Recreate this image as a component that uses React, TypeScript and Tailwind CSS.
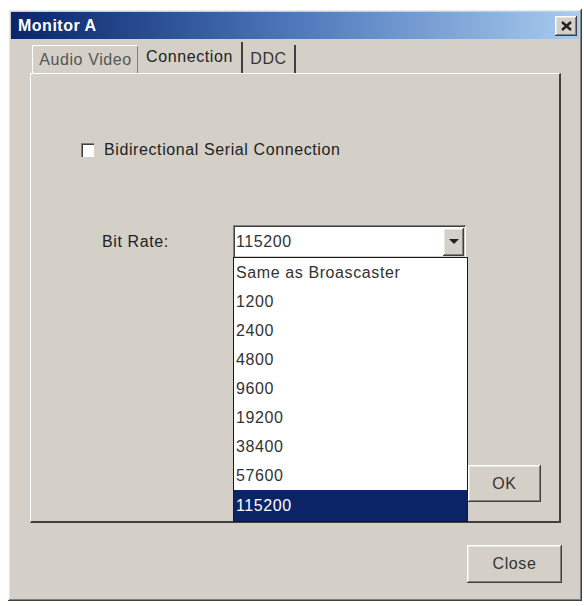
const rates = ["Same as Broascaster", "1200", "2400", "4800", "9600", "19200", "38400", "57600", "115200"]

// classic 3D bevels
const raised = "shadow-[inset_-1px_-1px_#404040,inset_1px_1px_#ffffff,inset_-2px_-2px_#808080,inset_2px_2px_#e8e6e1]"
const sunken = "shadow-[inset_1px_1px_#808080,inset_-1px_-1px_#ffffff,inset_2px_2px_#404040,inset_-2px_-2px_#d4d0c8]"

function Button({ label, className }: { label: string; className: string }) {
  return (
    <div className={`flex items-center justify-center bg-[#d4d0c8] text-[16px] tracking-[0.6px] text-[#333] ${raised} ${className}`}>
      {label}
    </div>
  )
}

export default function App() {
  return (
    <div className="w-[584px] h-[606px] bg-white pt-[9px] pl-[8px] font-['Liberation_Sans',Arial,sans-serif] overflow-hidden">
      <div className={`w-[574px] h-[592px] bg-[#d4d0c8] p-[3px] flex flex-col ${raised}`}>
        {/* title bar */}
        <div className="h-[27px] flex items-center justify-between pl-[7px] pr-[2px] bg-gradient-to-r from-[#0a246a] via-[#4f78bb] to-[#a9cbee]">
          <span className="text-white font-bold text-[16px] tracking-[0.5px]">Monitor A</span>
          <div className={`w-[22px] h-[20px] bg-[#d4d0c8] flex items-center justify-center ${raised}`}>
            <svg width="11" height="10" viewBox="0 0 11 10">
              <path d="M1 1 L10 9 M10 1 L1 9" stroke="#222" strokeWidth="2.4" />
            </svg>
          </div>
        </div>

        {/* tabs */}
        <div className="mt-[3px] h-[31px] ml-[21px] flex items-end text-[16px] tracking-[0.6px]">
          <div className="w-[106px] h-[28px] flex items-center justify-center text-[#555] border-t border-l border-white shadow-[inset_-1px_0_#808080]">
            Audio Video
          </div>
          <div className="w-[105px] h-[31px] flex items-center justify-center text-[#222] border-r-2 border-[#404040] pb-[2px]">
            Connection
          </div>
          <div className="w-[53px] h-[28px] flex items-center justify-center text-[#333] border-r-2 border-[#404040]">
            DDC
          </div>
        </div>

        {/* page */}
        <div className="relative ml-[19px] w-[531px] h-[450px] flex flex-col border-t border-l border-white border-r-2 border-b-2 border-r-[#404040] border-b-[#404040] text-[16px] tracking-[0.6px] text-[#222]">
          <div className="mt-[66px] h-[20px] pl-[50px] flex items-center gap-[10px]">
            <div className="w-[13px] h-[14px] bg-white shadow-[inset_1px_1px_#808080,inset_2px_2px_#404040]" />
            <span>Bidirectional Serial Connection</span>
          </div>

          <div className="mt-[65px] h-[33px] pl-[71px] flex items-center">
            <span className="w-[131px]">Bit Rate:</span>
            <div className={`w-[233px] h-[33px] bg-white flex items-center pl-[3px] pr-[2px] ${sunken}`}>
              <span className="flex-1 text-[#333]">115200</span>
              <div className={`w-[21px] h-[28px] bg-[#d4d0c8] flex items-center justify-center ${raised}`}>
                <svg width="10" height="6" viewBox="0 0 10 6">
                  <path d="M0 0 H10 L5 5 Z" fill="#222" />
                </svg>
              </div>
            </div>
          </div>

          <div className="flex-1" />
          <div className="flex justify-end pr-[18px] pb-[19px]">
            <Button label="OK" className="w-[73px] h-[37px]" />
          </div>

          {/* open combo list */}
          <div className="absolute left-[202px] top-[183px] w-[235px] h-[265px] bg-white border border-[#1a1a1a] flex flex-col">
            {rates.map((r, i) => {
              const last = i === rates.length - 1
              return (
                <div
                  key={r}
                  className={`flex items-center pl-[2px] ${last ? "flex-1 bg-[#0b2466] text-white" : "h-[29px] text-[#333]"}`}
                >
                  {r}
                </div>
              )
            })}
          </div>
        </div>

        <div className="mt-[22px] flex justify-end pr-[17px]">
          <Button label="Close" className="w-[95px] h-[38px]" />
        </div>
      </div>
    </div>
  )
}
